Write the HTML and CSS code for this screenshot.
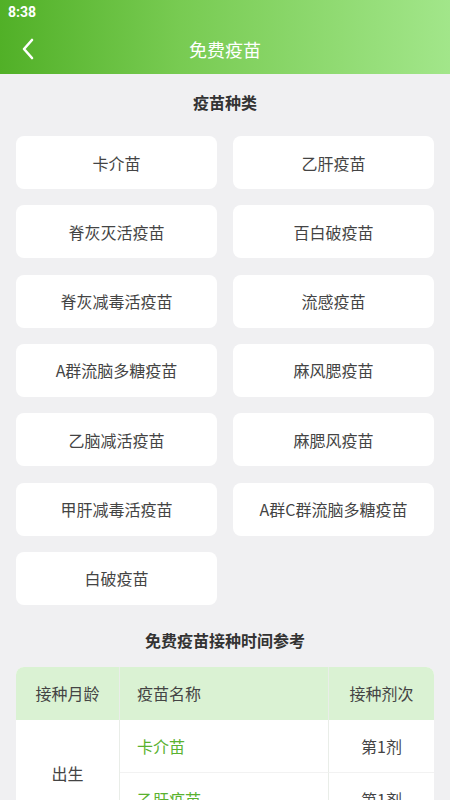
FILE: index.html
```html
<!DOCTYPE html>
<html lang="zh">
<head>
<meta charset="utf-8">
<link rel="stylesheet" href="styles.css">
</head>
<body>
<div class="top">
  <div class="status">8:38</div>
  <div class="nav">
    <svg class="back" width="14" height="22" viewBox="0 0 14 22"><path d="M11 2 L3 11 L11 20" fill="none" stroke="#fff" stroke-width="2.6" stroke-linecap="round" stroke-linejoin="round"/></svg>
    <div class="title">免费疫苗</div>
  </div>
</div>
<div class="content">
  <h2 class="sec">疫苗种类</h2>
  <div class="grid">
    <div class="card">卡介苗</div>
    <div class="card">乙肝疫苗</div>
    <div class="card">脊灰灭活疫苗</div>
    <div class="card">百白破疫苗</div>
    <div class="card">脊灰减毒活疫苗</div>
    <div class="card">流感疫苗</div>
    <div class="card">A群流脑多糖疫苗</div>
    <div class="card">麻风腮疫苗</div>
    <div class="card">乙脑减活疫苗</div>
    <div class="card">麻腮风疫苗</div>
    <div class="card">甲肝减毒活疫苗</div>
    <div class="card">A群C群流脑多糖疫苗</div>
    <div class="card">白破疫苗</div>
  </div>
  <h2 class="sec sec2">免费疫苗接种时间参考</h2>
  <div class="table">
    <div class="th c1">接种月龄</div>
    <div class="th c2">疫苗名称</div>
    <div class="th c3">接种剂次</div>
    <div class="td c1 span2">出生</div>
    <div class="td c2 link">卡介苗</div>
    <div class="td c3">第1剂</div>
    <div class="td c2 link">乙肝疫苗</div>
    <div class="td c3">第1剂</div>
  </div>
</div>
</body>
</html>
```
FILE: styles.css
```css
* { box-sizing: border-box; }
html, body { margin: 0; padding: 0; }
body {
  width: 450px;
  background: #f0f0f2;
  font-family: "Noto Sans CJK SC", "Noto Sans", sans-serif;
  color: #444;
}
.top {
  height: 74px;
  background: linear-gradient(90deg, #51b027 0%, #78cb52 40%, #a2e68a 100%);
  color: #fff;
}
.status {
  height: 24px;
  padding: 3px 0 0 8px;
  font-family: Roboto, "Noto Sans", sans-serif;
  font-weight: 700;
  font-size: 14px;
  line-height: 18px;
}
.nav {
  height: 50px;
  display: flex;
  align-items: center;
  justify-content: center;
  position: relative;
}
.back {
  position: absolute;
  left: 21px;
  top: 14px;
}
.title {
  font-size: 18px;
  line-height: 24px;
}
.content {
  padding: 0 16px;
}
.sec {
  margin: 0;
  padding: 16px 0 0;
  height: 62px;
  text-align: center;
  font-size: 16px;
  font-weight: 700;
  line-height: 24px;
  color: #333;
}
.grid {
  display: grid;
  grid-template-columns: 1fr 1fr;
  column-gap: 16px;
  row-gap: 16.33px;
}
.card {
  height: 53px;
  background: #fff;
  border-radius: 8px;
  display: flex;
  align-items: center;
  justify-content: center;
  font-size: 16px;
  color: #444;
}
.sec2 {
  padding-top: 23px;
  height: 62px;
}
.table {
  display: grid;
  grid-template-columns: 104px 209px 105px;
  grid-auto-rows: 53px;
  background: #fff;
  border-radius: 8px 8px 0 0;
  overflow: hidden;
}
.th, .td {
  display: flex;
  align-items: center;
  font-size: 16px;
  color: #444;
}
.th { background: #daf2d3; }
.c1 { justify-content: center; border-right: 1px solid #e9ede8; }
.c2 { padding-left: 17px; border-right: 1px solid #e9ede8; }
.c3 { justify-content: center; }
.td.c2, .td.c3 { border-bottom: 1px solid #f2f2f2; }
.span2 { grid-row: span 2; }
.link { color: #5ab22f; }
```
